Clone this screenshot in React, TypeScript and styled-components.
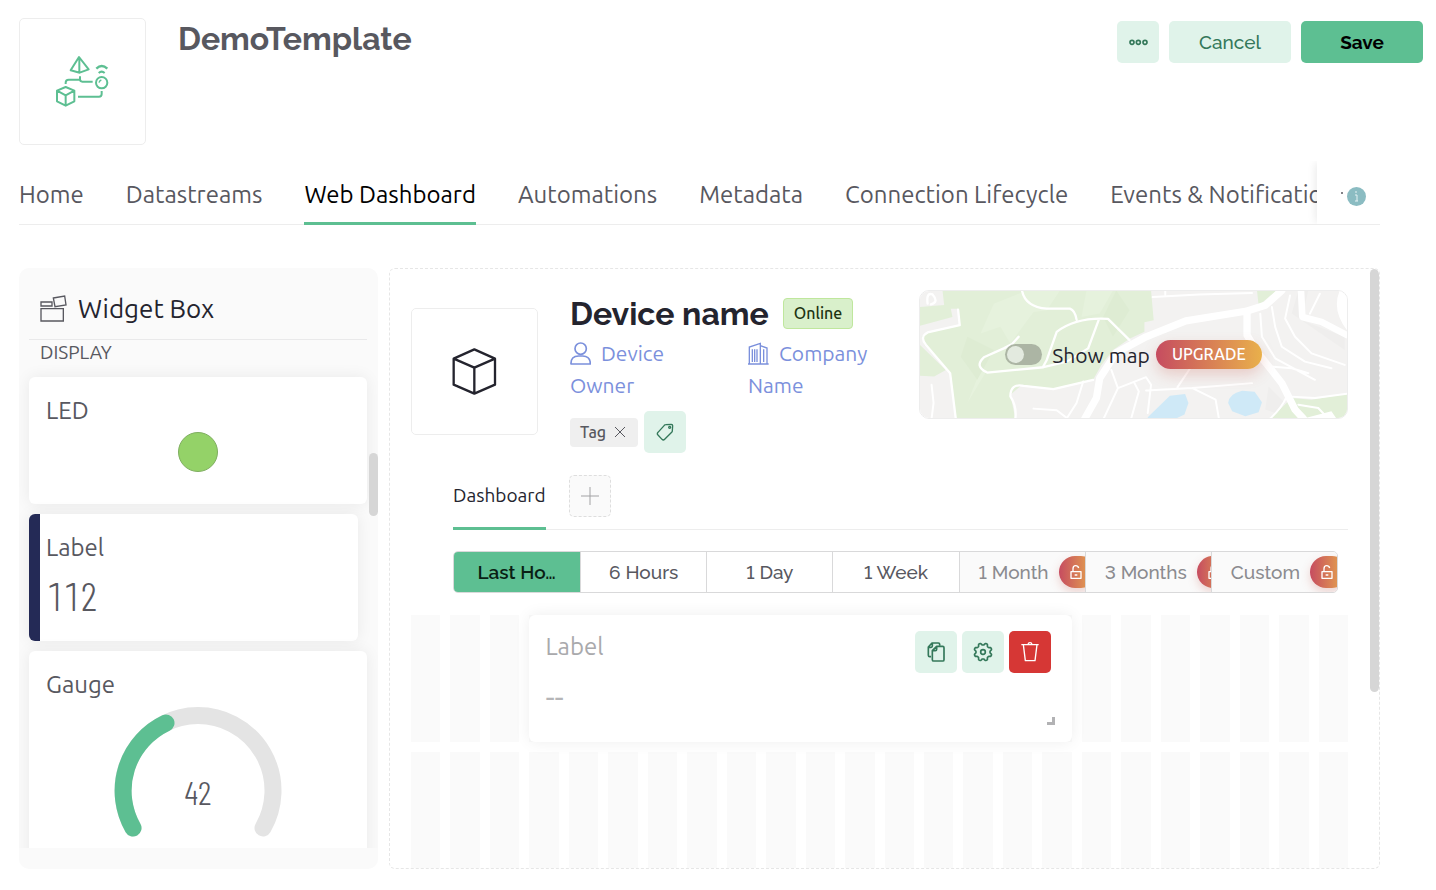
import React from "react";
import styled, { createGlobalStyle, css } from "styled-components";

const body = `"Ubuntu", "Noto Sans", "Open Sans", sans-serif`;
const display = `"Raleway", "Lato", sans-serif`;
const narrow = `"Barlow Condensed", "Roboto Condensed", "Roboto", sans-serif`;

const green = "#5dbf92";
const mint = "#e0f3ea";
const forest = "#34785a";
const ink = "#24242e";
const slate = "#58585f";
const line = "#ededed";

const GlobalStyle = createGlobalStyle`
  *, *::before, *::after { box-sizing: border-box; }
  body { margin: 0; background: #fff; color: ${ink}; font-family: ${body}; }
  button { font: inherit; margin: 0; padding: 0; border: 0; background: none; cursor: pointer; }
  h1, h2, h3, p { margin: 0; font-weight: 400; }
  svg { display: block; flex: none; }
`;

const Page = styled.div`
  padding: 18px 13px 21px 19px;
`;

const Header = styled.header`
  display: flex;
  align-items: flex-start;
`;

const ImageBox = styled.div`
  flex: none;
  display: grid;
  place-items: center;
  width: 127px;
  height: 127px;
  border: 1px solid ${line};
  border-radius: 5px;
  background: #fff;
`;

const Title = styled.h1`
  flex: 1;
  margin-left: 32px;
  font: 700 32px/42px ${display};
  color: ${slate};
`;

const Actions = styled.div`
  display: flex;
  gap: 10px;
  padding-top: 3px;
`;

const Button = styled.button<{ $primary?: boolean; $square?: boolean }>`
  display: grid;
  place-items: center;
  width: ${(p) => (p.$square ? 42 : 122)}px;
  height: 42px;
  border-radius: 5px;
  background: ${(p) => (p.$primary ? green : mint)};
  color: ${(p) => (p.$primary ? "#000" : forest)};
  font: ${(p) => (p.$primary ? 700 : 500)} 19px/24px ${display};
`;

const Main = styled.main`
  margin-right: 43px;
`;

const TabBar = styled.nav`
  display: flex;
  height: 64px;
  margin-top: 16px;
  border-bottom: 1px solid ${line};
`;

const TabList = styled.div`
  display: flex;
  flex: 1;
  gap: 42px;
  min-width: 0;
  margin-bottom: -1px;
  overflow: hidden;
`;

const Tab = styled.button<{ $active?: boolean }>`
  flex: none;
  padding-top: 6px;
  border-bottom: 3px solid ${(p) => (p.$active ? green : "transparent")};
  font-size: 24px;
  line-height: 32px;
  color: ${(p) => (p.$active ? "#000" : slate)};
`;

const MoreTabs = styled.div`
  display: flex;
  align-items: center;
  gap: 4px;
  width: 63px;
  padding: 7px 0 0 24px;
  color: ${slate};
  background: #fff;
  box-shadow: -4px 0 8px -2px rgba(0, 0, 0, 0.08);
  clip-path: inset(0 0 0 -16px);
`;

const Dot = styled.span`
  width: 2px;
  height: 2px;
  margin-bottom: 6px;
  border-radius: 50%;
  background: ${slate};
`;

const InfoDot = styled.span`
  display: grid;
  place-items: center;
  width: 19px;
  height: 19px;
  border-radius: 50%;
  background: #8bbcc2;
`;

const Workspace = styled.div`
  display: flex;
  gap: 11px;
  height: calc(100vh - 289px);
  min-height: 480px;
  margin-top: 43px;
`;

const WidgetBox = styled.aside`
  position: relative;
  flex: none;
  display: flex;
  flex-direction: column;
  width: 359px;
  padding: 10px 0 21px;
  border-radius: 10px;
  background: #fafafa;
`;

const WidgetBoxTitle = styled.h2`
  display: flex;
  align-items: center;
  gap: 11px;
  height: 62px;
  margin: 0 11px 0 10px;
  padding: 0 0 0 11px;
  border-bottom: 1px solid #e9e9ea;
  font-size: 26px;
  line-height: 32px;
  color: ${ink};
`;

const WidgetList = styled.div`
  flex: 1;
  display: flex;
  flex-direction: column;
  gap: 10px;
  min-height: 0;
  padding: 0 11px 0 10px;
  overflow: hidden;
`;

const GroupTitle = styled.h3`
  flex: none;
  padding: 0 11px 3px;
  font-size: 19px;
  line-height: 24px;
  color: ${slate};
`;

const Card = styled.article<{ $tall?: boolean; $accent?: boolean }>`
  flex: none;
  display: flex;
  flex-direction: column;
  height: ${(p) => (p.$tall ? 264 : 127)}px;
  padding: 18px 17px;
  border-radius: 6px;
  background: #fff;
  box-shadow: 0 0 16px rgba(0, 0, 0, 0.07);
  ${(p) =>
    p.$accent &&
    css`
      margin-right: 9px;
      padding-left: 6px;
      border-left: 11px solid #242a56;
    `}
`;

const CardTitle = styled.h3<{ $muted?: boolean }>`
  font-size: 24px;
  line-height: 32px;
  color: ${(p) => (p.$muted ? "#a9a9ac" : slate)};
`;

const Led = styled.span`
  align-self: center;
  width: 40px;
  height: 40px;
  margin-top: 5px;
  border: 1px solid #7fae60;
  border-radius: 50%;
  background: #94d268;
`;

const Reading = styled.p`
  padding: 11px 0 0 1px;
  font: 300 40px/40px ${narrow};
  font-variant-numeric: tabular-nums;
  color: ${slate};
`;

const GaugeWrap = styled.div`
  display: grid;
  place-items: center;
  margin-top: 6px;

  > * {
    grid-area: 1 / 1;
  }
`;

const GaugeValue = styled.p`
  padding-top: 38px;
  font: 300 34px/40px ${narrow};
  color: ${slate};
`;

const Thumb = styled.span<{ $top: number; $height: string }>`
  position: absolute;
  top: ${(p) => p.$top}px;
  right: 0;
  width: 9px;
  height: ${(p) => p.$height};
  border-radius: 5px;
  background: #d6d6d6;
`;

const Canvas = styled.section`
  position: relative;
  flex: 1;
  min-width: 0;
  padding: 21px 31px 0 21px;
  border: 1px dashed #e6e6e6;
  border-radius: 6px;
  overflow: hidden;
`;

const Device = styled.div`
  display: flex;
  align-items: flex-start;
`;

const DeviceImage = styled(ImageBox)`
  margin-top: 18px;
`;

const DeviceInfo = styled.div`
  flex: none;
  width: 349px;
  margin-left: 32px;
`;

const DeviceHeading = styled.div`
  display: flex;
  align-items: center;
  gap: 14px;
  height: 47px;
`;

const DeviceName = styled.h2`
  font: 700 32px/42px ${display};
  color: ${ink};
`;

const Status = styled.span`
  padding: 0 10px;
  border: 1px solid #bfe79d;
  border-radius: 4px;
  background: #d9f0cb;
  font-size: 16px;
  font-weight: 500;
  line-height: 29px;
  color: #1d3312;
`;

const Meta = styled.div`
  display: grid;
  grid-template-columns: 130px 130px;
  column-gap: 48px;
`;

const MetaLink = styled.a`
  font-size: 21px;
  line-height: 32px;
  color: #7b90dc;
  text-decoration: none;

  svg {
    display: inline-block;
    margin-right: 10px;
    vertical-align: -4px;
  }
`;

const Tags = styled.div`
  display: flex;
  align-items: center;
  gap: 6px;
  margin-top: 10px;
`;

const Tag = styled.span`
  display: flex;
  align-items: center;
  gap: 8px;
  height: 29px;
  padding: 0 12px 0 10px;
  border-radius: 4px;
  background: #efefef;
  font-size: 16px;
  font-weight: 500;
  color: ${slate};

  button {
    color: ${slate};
  }
`;

const MapBox = styled.div`
  flex: 1;
  display: grid;
  min-width: 0;
  height: 129px;
  border: 1px solid ${line};
  border-radius: 10px;
  overflow: hidden;

  > * {
    grid-area: 1 / 1;
  }
`;

const MapOverlay = styled.div`
  position: relative;
  display: flex;
  align-items: center;
  justify-content: center;
  gap: 6px;
`;

const SwitchLabel = styled.label`
  display: flex;
  align-items: center;
  gap: 10px;
  font-size: 21px;
  line-height: 32px;
`;

const Switch = styled.input`
  appearance: none;
  width: 37px;
  height: 21px;
  margin: 0;
  border-radius: 11px;
  background: #acb5a4;

  &::before {
    content: "";
    display: block;
    width: 17px;
    height: 17px;
    margin: 2px;
    border-radius: 50%;
    background: #e3eadf;
  }
`;

const Upgrade = styled.button`
  height: 29px;
  padding: 0 16px;
  border-radius: 15px;
  background: linear-gradient(90deg, #c64c60, #e9b04b);
  box-shadow: 0 6px 14px rgba(200, 90, 80, 0.25);
  font-size: 16px;
  font-weight: 500;
  line-height: 29px;
  color: #fff;
`;

const Pages = styled.div`
  display: flex;
  gap: 23px;
  height: 55px;
  margin: 22px 0 0 42px;
  border-bottom: 1px solid ${line};
`;

const PageTab = styled.button`
  height: 55px;
  padding-bottom: 12px;
  border-bottom: 3px solid ${green};
  font-size: 19px;
  line-height: 24px;
  color: ${ink};
`;

const AddPage = styled.button`
  display: grid;
  place-items: center;
  width: 42px;
  height: 42px;
  border: 1px dashed #dedede;
  border-radius: 5px;
  background: #fafafa;
`;

const Ranges = styled.div`
  display: grid;
  grid-template-columns: repeat(7, minmax(0, 1fr));
  height: 42px;
  margin: 21px 10px 0 42px;
  border: 1px solid #d9d9da;
  border-radius: 5px;
  overflow: hidden;
`;

const Range = styled.button<{ $active?: boolean; $locked?: boolean }>`
  display: flex;
  align-items: center;
  justify-content: ${(p) => (p.$locked ? "flex-start" : "center")};
  gap: 10px;
  min-width: 0;
  height: ${(p) => (p.$active ? 42 : 40)}px;
  margin: ${(p) => (p.$active ? "-1px 0 -1px -1px" : "0")};
  padding-left: ${(p) => (p.$locked ? 19 : 0)}px;
  overflow: hidden;
  font: ${(p) => (p.$active ? 600 : 500)} 19px/24px ${display};
  font-variant-numeric: lining-nums;
  white-space: nowrap;
  color: ${(p) => (p.$active ? "#0a1f15" : p.$locked ? "#8b8b8f" : slate)};
  background: ${(p) => (p.$active ? green : p.$locked ? "#fafafa" : "#fff")};

  & + & {
    border-left: 1px solid #d9d9da;
  }
`;

const LockPill = styled.span`
  flex: none;
  display: grid;
  align-items: center;
  width: 38px;
  height: 32px;
  padding-left: 11px;
  border-radius: 16px;
  background: linear-gradient(90deg, #c64c60, #e9b04b);
  box-shadow: 0 4px 10px rgba(200, 90, 80, 0.25);
`;

const Grid = styled.div`
  display: grid;
  grid-template-columns: repeat(24, minmax(0, 1fr));
  grid-auto-rows: 127px;
  gap: 10px;
  margin-top: 22px;
`;

const Cell = styled.span<{ $row: number; $col: number }>`
  grid-row: ${(p) => p.$row};
  grid-column: ${(p) => p.$col};
  background: #fafafa;
`;

const PlacedWidget = styled.article`
  position: relative;
  display: flex;
  justify-content: space-between;
  grid-row: 1;
  grid-column: 4 / span 14;
  padding: 16px 21px 16px 16px;
  border-radius: 6px;
  background: #fff;
  box-shadow: 0 0 16px rgba(0, 0, 0, 0.07);
`;

const EmptyValue = styled.p`
  padding-top: 13px;
  font-size: 32px;
  line-height: 40px;
  color: #b5b5b7;
`;

const Tools = styled.div`
  display: flex;
  align-items: flex-start;
  gap: 5px;
`;

const Tool = styled(Button)<{ $danger?: boolean }>`
  background: ${(p) => (p.$danger ? "#d63735" : mint)};
  color: ${(p) => (p.$danger ? "#fff" : forest)};
`;

const ResizeHandle = styled.span`
  position: absolute;
  right: 17px;
  bottom: 17px;
  width: 8px;
  height: 8px;
  border: solid #b2b2b4;
  border-width: 0 3px 3px 0;
`;

const stroke = { fill: "none", stroke: "currentColor" } as const;

const TemplateLogo = () => (
  <svg width="55" height="53" viewBox="165 165 165 159" fill="none" stroke={green} strokeWidth="6" strokeLinejoin="round">
    <path d="M237 171 212 211 239 218 266 208ZM238 171V217" />
    <path d="M289 206Q305 190 322 206" strokeWidth="7" />
    <path d="M296 219Q305 211 314 219" />
    <circle cx="305" cy="248" r="17" />
    <path d="M297 248Q298 242 304 240" strokeWidth="4" />
    <path d="M197 252V248Q197 239 206 239H239M240 229V238Q240 245 247 245H278M305 273V282Q305 290 297 290H234" />
    <path d="M197 261 223 272V304L197 317 171 304V272ZM171 272 197 286 223 272M197 286V317" />
  </svg>
);

const Cube = () => (
  <svg width="45" height="47" viewBox="198 264 135 141" fill="none" stroke={ink} strokeWidth="7" strokeLinejoin="round">
    <path d="M265 268 327 296V374L265 401 203 374V296ZM203 296 265 323 327 296M265 323V401" />
  </svg>
);

const BoxIcon = () => (
  <svg width="27" height="27" viewBox="118 121 81 81" fill="none" stroke={slate} strokeWidth="4">
    <path d="M121 142H154V154H121ZM121 162H188V199H121ZM158 130 192 124 196 151 163 156Z" />
  </svg>
);

const UserIcon = () => (
  <svg width="21" height="23" viewBox="552 248 63 69" {...stroke} strokeWidth="5" strokeLinejoin="round">
    <circle cx="584" cy="268" r="17" />
    <path d="M555 314Q554 290 578 290H590Q613 290 613 314Z" />
  </svg>
);

const CompanyIcon = () => (
  <svg width="21" height="23" viewBox="1086 248 63 69" {...stroke} strokeWidth="4">
    <path d="M1090 314V263L1123 252V314M1123 259 1143 266V314M1086 314H1148" />
    <path d="M1099 270V308M1106 270V308M1113 270V308M1133 270V308" />
  </svg>
);

const TagIcon = () => (
  <svg width="18" height="18" viewBox="811 492 54 54" {...stroke} strokeWidth="4" strokeLinejoin="round">
    <path d="M840 497 857 496Q861 496 861 500L860 515Q860 518 858 520L837 541Q833 545 829 541L817 528Q813 524 817 520L836 499Q838 497 840 497Z" />
    <circle cx="852" cy="505" r="3" />
  </svg>
);

const CloseIcon = () => (
  <svg width="12" height="12" viewBox="0 0 12 12" {...stroke}>
    <path d="M1 1 11 11M11 1 1 11" />
  </svg>
);

const PlusIcon = () => (
  <svg width="18" height="18" viewBox="0 0 18 18" fill="none" stroke="#a2a2a4">
    <path d="M9 0V18M0 9H18" />
  </svg>
);

const DotsIcon = () => (
  <svg width="19" height="7" viewBox="0 0 57 21" {...stroke} strokeWidth="5">
    <circle cx="9" cy="10" r="6" />
    <circle cx="28" cy="10" r="6" />
    <circle cx="48" cy="10" r="6" />
  </svg>
);

const InfoIcon = () => (
  <svg width="5" height="11" viewBox="0 0 5 11" fill="none" stroke="#e4f1f3">
    <path d="M2 0V2M1 4H3V10M1 10H4" />
  </svg>
);

const CopyIcon = () => (
  <svg width="18" height="20" viewBox="194 335 54 60" {...stroke} strokeWidth="5" strokeLinejoin="round">
    <path d="M206 379H202Q198 379 198 375V350L209 338H228Q232 338 232 342V346M198 351H206Q210 351 210 347V339" />
    <path d="M223 348H241Q245 348 245 352V388Q245 392 241 392H214Q210 392 210 388V361ZM211 361H219Q223 361 223 357V349" />
  </svg>
);

const gearPath = (() => {
  const points: string[] = [];
  for (let i = 0; i < 96; i++) {
    const a = (i / 96) * Math.PI * 2;
    const wave = Math.cos(8 * (a - Math.PI / 8));
    const r = 24 + 3 * Math.tanh(2 * wave);
    points.push(`${(30 + r * Math.cos(a)).toFixed(1)} ${(30 + r * Math.sin(a)).toFixed(1)}`);
  }
  return `M${points.join("L")}Z`;
})();

const GearIcon = () => (
  <svg width="20" height="20" viewBox="0 0 60 60" {...stroke} strokeWidth="5" strokeLinejoin="round">
    <path d={gearPath} />
    <circle cx="30" cy="30" r="7" />
  </svg>
);

const TrashIcon = () => (
  <svg width="18" height="20" viewBox="477 336 54 60" {...stroke} strokeWidth="4" strokeLinejoin="round">
    <path d="M478 344H530M484 344 490 392H519L525 344M498 343Q499 338 504 338T510 343" />
  </svg>
);

const LockIcon = () => (
  <svg width="12" height="14" viewBox="620 106 36 42" fill="none" stroke="#fff" strokeWidth="4" strokeLinejoin="round">
    <path d="M623 126H653V146H623ZM629 126V117Q629 108 637 108 644 108 646 115M634 136H642" />
  </svg>
);

const Gauge = () => (
  <svg width="168" height="132" viewBox="0 0 168 132" fill="none" strokeWidth="17" strokeLinecap="round">
    <path d="M19 121A75 75 0 1 1 149 121" stroke="#e4e4e4" />
    <path d="M19 121A75 75 0 0 1 52 16" stroke={green} />
  </svg>
);

const MapArt = () => (
  <svg width="100%" height="100%" viewBox="57 60 1290 387" preserveAspectRatio="xMidYMid slice" aria-hidden="true">
    <path d="M57 60H1347V447H57Z" fill="#f3f2f1" />
    <path
      d="M125 60H755L763 150 735 156V185L690 206 640 240 605 285 580 330 460 360 365 345 330 375 345 447H165L150 310 70 225 62 200 80 187 177 165 172 115H150L155 140 57 167V110L130 104Z"
      fill="#e2efd8"
    />
    <path d="M57 225 135 300 100 320 57 318ZM1075 60H1135L1080 105ZM1180 385 1240 390 1347 372V447H1200L1115 447Z" fill="#e2efd8" />
    <path d="M480 60 440 120 400 125 330 220 300 170 240 190 280 100 380 60ZM560 60 640 60 600 130 545 140ZM240 300 200 400 260 300Z" fill="#e6f2dd" />
    <path d="M650 60 690 120 640 200 610 140ZM200 200 280 240 230 330 180 260Z" fill="#deecd3" />
    <path d="M1110 350 1160 400 1130 430 1100 420ZM1200 60 1230 60 1210 150 1340 200V240L1180 130Z" fill="#efeeed" />
    <path d="M745 443 812 378 858 373 868 400 856 435 830 447H745Z" fill="#cfe9f7" />
    <path d="M988 400Q990 372 1030 363L1068 366 1090 398 1080 428 1040 440 1000 425Z" fill="#cfe9f7" />
    <g fill="none" stroke="#fff" strokeLinejoin="round" strokeLinecap="round">
      <path
        d="M172 118 177 165 80 187Q55 200 75 225L148 310 165 447M365 60Q375 110 440 115H510Q525 120 530 148M690 210 625 146Q530 140 470 185L440 270 428 292M598 146 565 235 500 275 430 292 260 308Q220 290 250 262L310 235 335 222 355 200M345 447Q350 410 330 380 330 340 370 348L460 358 580 330M80 100Q75 65 95 72 115 95 90 102"
        strokeWidth="7"
      />
      <path
        d="M92 345 98 400 92 447M550 335 530 400 500 447M400 417 470 422 500 445M635 300 655 355 612 447M655 355 740 322 755 345 745 430M705 340 718 365 695 447M740 362 880 355 1060 340M890 270 835 352M880 355 950 390 960 447M760 80 900 72 1060 68M798 60V72M1120 110 1130 170 1150 230 1220 275 1300 295M1175 75 1160 145 1190 200 1240 250 1340 285M1085 130 1090 200 1130 265 1250 330M1265 70 1235 130M1115 290 1180 295 1230 310M1115 447Q1150 415 1165 380L1250 385 1347 372M1290 447 1260 415 1200 405"
        strokeWidth="6"
      />
      <path d="M1150 60 1100 105 1045 122 860 152 740 200 650 248 600 325 590 385 555 447M1045 122V195L1075 245 1150 340 1190 420 1215 447" strokeWidth="22" />
      <path d="M1208 60 1212 140 1270 155 1347 195" strokeWidth="20" />
    </g>
    <path d="M1325 60Q1300 120 1347 180V60ZM1215 447 1300 425 1315 447Z" fill="#fff" />
  </svg>
);

const tabs = ["Home", "Datastreams", "Web Dashboard", "Automations", "Metadata", "Connection Lifecycle", "Events & Notifications"];

const ranges = [
  { label: "Last Ho…", active: true },
  { label: "6 Hours" },
  { label: "1 Day" },
  { label: "1 Week" },
  { label: "1 Month", locked: true },
  { label: "3 Months", locked: true },
  { label: "Custom", locked: true },
];

const columns = Array.from({ length: 24 }, (_, i) => i + 1);

export default function App() {
  return (
    <>
      <GlobalStyle />
      <Page>
        <Header>
          <ImageBox>
            <TemplateLogo />
          </ImageBox>
          <Title>DemoTemplate</Title>
          <Actions>
            <Button $square aria-label="More actions">
              <DotsIcon />
            </Button>
            <Button>Cancel</Button>
            <Button $primary>Save</Button>
          </Actions>
        </Header>

        <Main>
          <TabBar>
            <TabList>
              {tabs.map((tab) => (
                <Tab key={tab} $active={tab === "Web Dashboard"}>
                  {tab}
                </Tab>
              ))}
            </TabList>
            <MoreTabs>
              <Dot />
              <InfoDot>
                <InfoIcon />
              </InfoDot>
            </MoreTabs>
          </TabBar>

          <Workspace>
            <WidgetBox>
              <WidgetBoxTitle>
                <BoxIcon />
                Widget Box
              </WidgetBoxTitle>
              <WidgetList>
                <GroupTitle>DISPLAY</GroupTitle>
                <Card>
                  <CardTitle>LED</CardTitle>
                  <Led />
                </Card>
                <Card $accent>
                  <CardTitle>Label</CardTitle>
                  <Reading>112</Reading>
                </Card>
                <Card $tall>
                  <CardTitle>Gauge</CardTitle>
                  <GaugeWrap>
                    <Gauge />
                    <GaugeValue>42</GaugeValue>
                  </GaugeWrap>
                </Card>
              </WidgetList>
              <Thumb $top={185} $height="63px" />
            </WidgetBox>

            <Canvas>
              <Device>
                <DeviceImage>
                  <Cube />
                </DeviceImage>
                <DeviceInfo>
                  <DeviceHeading>
                    <DeviceName>Device name</DeviceName>
                    <Status>Online</Status>
                  </DeviceHeading>
                  <Meta>
                    <MetaLink href="#owner">
                      <UserIcon />
                      Device Owner
                    </MetaLink>
                    <MetaLink href="#company">
                      <CompanyIcon />
                      Company Name
                    </MetaLink>
                  </Meta>
                  <Tags>
                    <Tag>
                      Tag
                      <button aria-label="Remove tag">
                        <CloseIcon />
                      </button>
                    </Tag>
                    <Button $square aria-label="Edit tags">
                      <TagIcon />
                    </Button>
                  </Tags>
                </DeviceInfo>
                <MapBox>
                  <MapArt />
                  <MapOverlay>
                    <SwitchLabel>
                      <Switch type="checkbox" role="switch" />
                      Show map
                    </SwitchLabel>
                    <Upgrade>UPGRADE</Upgrade>
                  </MapOverlay>
                </MapBox>
              </Device>

              <Pages>
                <PageTab>Dashboard</PageTab>
                <AddPage aria-label="Add page">
                  <PlusIcon />
                </AddPage>
              </Pages>

              <Ranges>
                {ranges.map((range) => (
                  <Range key={range.label} $active={range.active} $locked={range.locked}>
                    {range.label}
                    {range.locked && (
                      <LockPill>
                        <LockIcon />
                      </LockPill>
                    )}
                  </Range>
                ))}
              </Ranges>

              <Grid>
                {[1, 2].map((row) => columns.map((col) => <Cell key={`${row}-${col}`} $row={row} $col={col} />))}
                <PlacedWidget>
                  <div>
                    <CardTitle $muted>Label</CardTitle>
                    <EmptyValue>--</EmptyValue>
                  </div>
                  <Tools>
                    <Tool $square aria-label="Duplicate">
                      <CopyIcon />
                    </Tool>
                    <Tool $square aria-label="Settings">
                      <GearIcon />
                    </Tool>
                    <Tool $square $danger aria-label="Delete">
                      <TrashIcon />
                    </Tool>
                  </Tools>
                  <ResizeHandle />
                </PlacedWidget>
              </Grid>
              <Thumb $top={0} $height="423px" />
            </Canvas>
          </Workspace>
        </Main>
      </Page>
    </>
  );
}
